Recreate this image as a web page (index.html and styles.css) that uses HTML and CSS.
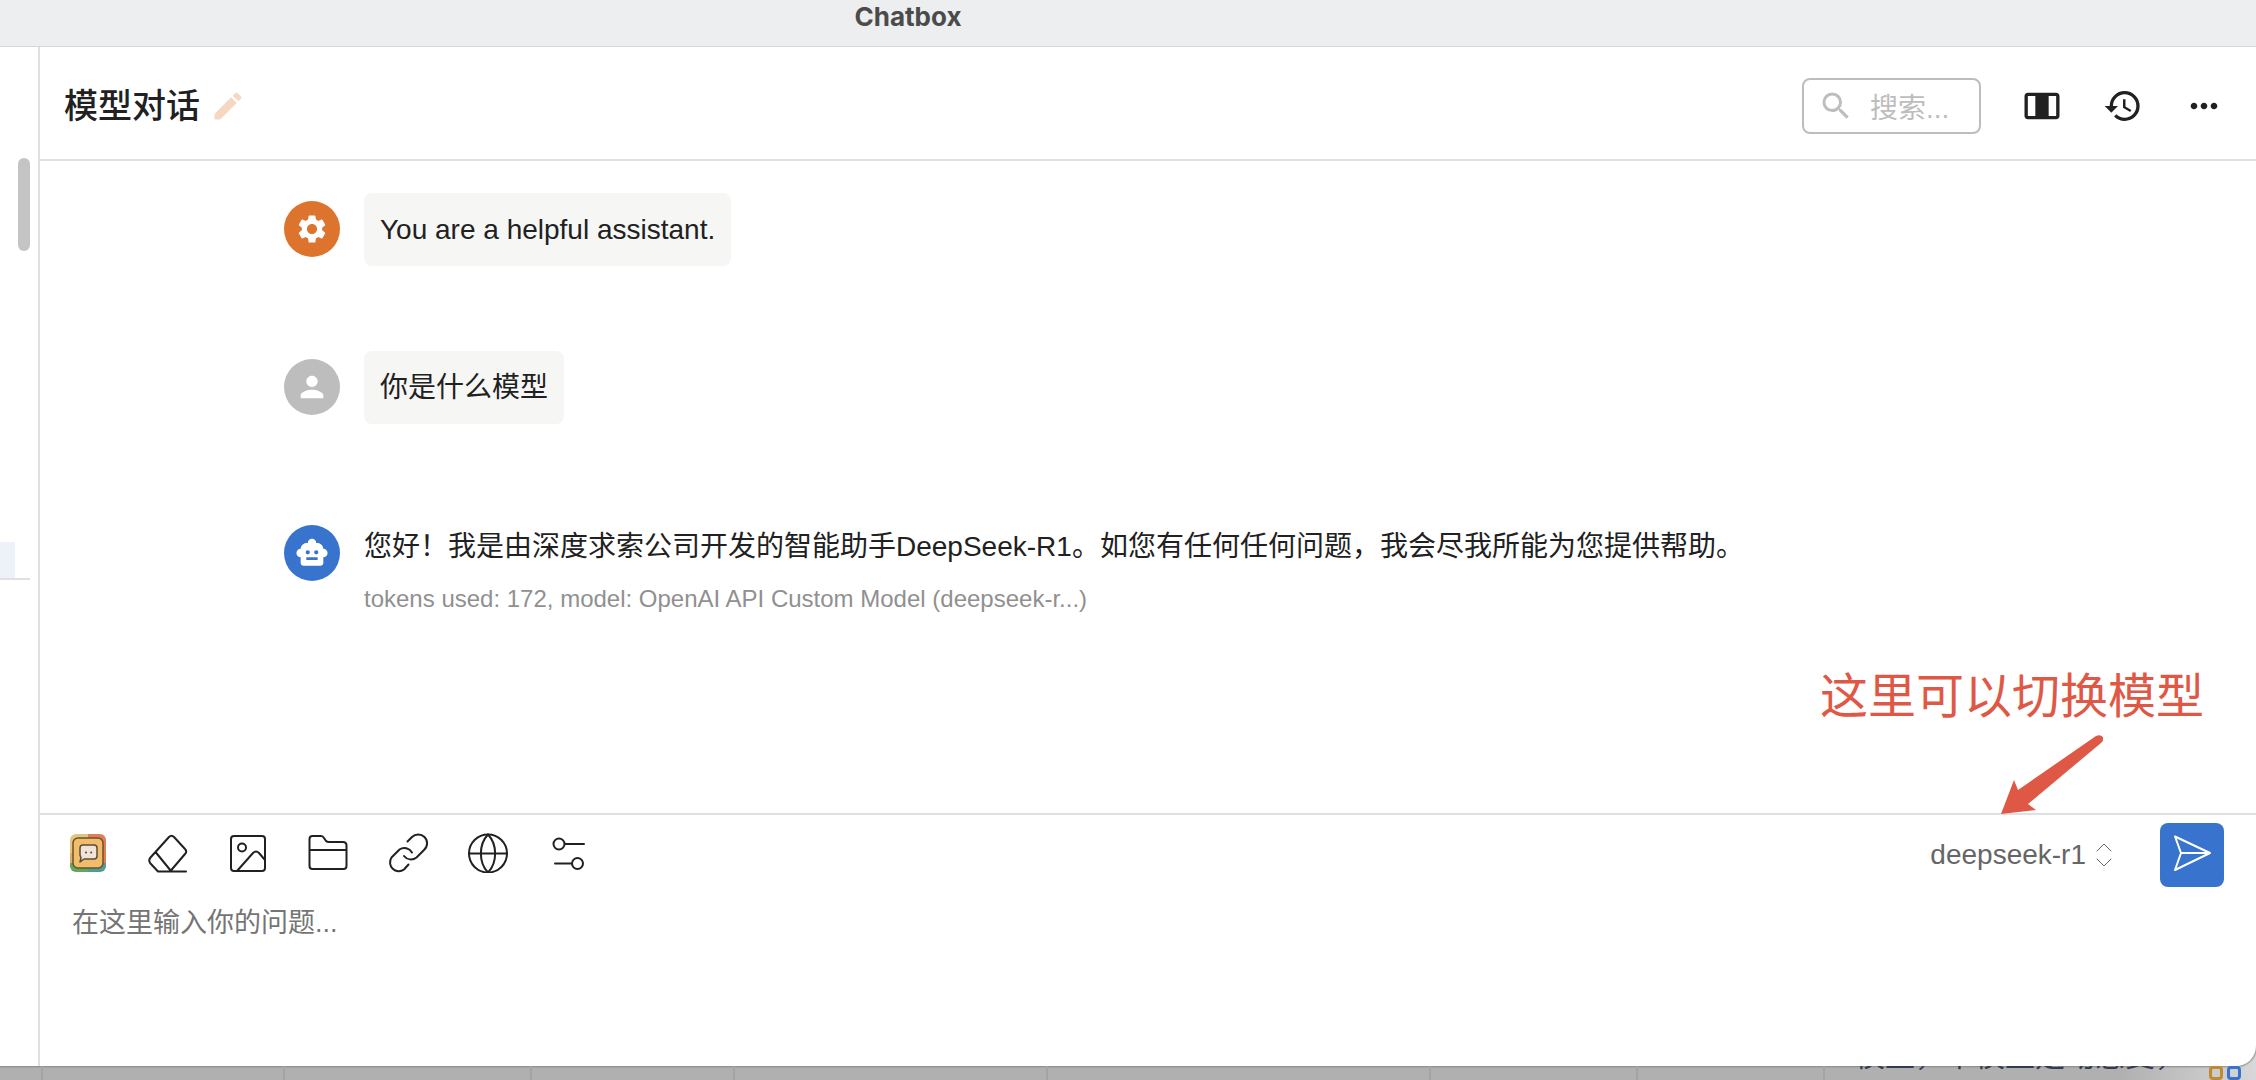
FILE: index.html
```
<!DOCTYPE html>
<html lang="zh-CN">
<head>
  <meta charset="UTF-8">
  <meta name="viewport" content="width=device-width, initial-scale=1.0">
  <title>Chatbox</title>
  <link rel="stylesheet" href="styles.css">
</head>
<body>

  <div class="window">
    <div class="titlebar">Chatbox</div>

    <div class="app">
      <aside class="sidebar">
        <div class="scrollbar"></div>
        <div class="session"></div>
      </aside>

      <main class="chat">
        <header class="chat-header">
          <h1>模型对话</h1>
          <button type="button" class="edit" aria-label="编辑">
            <svg viewBox="0 0 24 24"><path d="M3 17.25V21h3.75L17.81 9.94l-3.75-3.75L3 17.25zM20.71 7.04c.39-.39.39-1.02 0-1.41l-2.34-2.34a.996.996 0 0 0-1.41 0l-1.83 1.83 3.75 3.75 1.83-1.83z"/></svg>
          </button>
          <div class="header-tools">
            <button type="button" class="search">
              <svg viewBox="0 0 24 24"><path d="M15.5 14h-.79l-.28-.27A6.47 6.47 0 0 0 16 9.5 6.5 6.5 0 1 0 9.5 16c1.61 0 3.09-.59 4.23-1.57l.27.28v.79l5 4.99L20.49 19l-4.99-5zm-6 0C7.01 14 5 11.99 5 9.5S7.01 5 9.5 5 14 7.01 14 9.5 11.99 14 9.5 14z"/></svg>
              <span>搜索...</span>
            </button>
            <button type="button" class="icon-btn" aria-label="宽度">
              <svg viewBox="0 0 24 24"><path d="M20.500 4h-17C2.400 4 1.500 4.900 1.500 6v12c0 1.100.9 2 2 2h17c1.100 0 2-.9 2-2V6c0-1.100-.9-2-2-2zM8 18H3.500V6H8v12zm12.500 0H16V6h4.500v12z"/></svg>
            </button>
            <button type="button" class="icon-btn" aria-label="历史">
              <svg viewBox="0 0 24 24"><path d="M13 3a9 9 0 0 0-9 9H1l3.890 3.890.07.14L9 12H6c0-3.870 3.130-7 7-7s7 3.130 7 7-3.130 7-7 7c-1.930 0-3.680-.79-4.940-2.060l-1.420 1.420A8.954 8.954 0 0 0 13 21a9 9 0 0 0 0-18zm-1 5v5l4.280 2.540.72-1.210-3.500-2.080V8H12z"/></svg>
            </button>
            <button type="button" class="icon-btn" aria-label="更多">
              <svg viewBox="0 0 24 24"><path d="M6 10c-1.100 0-2 .9-2 2s.9 2 2 2 2-.9 2-2-.9-2-2-2zm12 0c-1.100 0-2 .9-2 2s.9 2 2 2 2-.9 2-2-.9-2-2-2zm-6 0c-1.100 0-2 .9-2 2s.9 2 2 2 2-.9 2-2-.9-2-2-2z"/></svg>
            </button>
          </div>
        </header>

        <section class="messages">
          <div class="message">
            <div class="avatar system">
              <svg viewBox="0 0 24 24"><path d="M19.140 12.940c.04-.3.060-.61.060-.94 0-.32-.02-.64-.07-.94l2.030-1.580c.18-.14.23-.41.12-.61l-1.920-3.320c-.12-.22-.37-.29-.59-.22l-2.390.96c-.5-.38-1.030-.7-1.620-.94l-.36-2.540c-.04-.24-.24-.41-.48-.41h-3.840c-.24 0-.43.17-.47.41l-.36 2.540c-.59.24-1.130.57-1.620.94l-2.390-.96c-.22-.08-.47 0-.59.22L2.740 8.870c-.12.21-.08.47.12.61l2.030 1.580c-.05.3-.09.63-.09.94s.02.64.07.94l-2.030 1.580c-.18.14-.23.41-.12.61l1.920 3.320c.12.22.37.29.59.22l2.390-.96c.5.38 1.030.7 1.620.94l.36 2.540c.05.24.24.41.48.41h3.840c.24 0 .44-.17.47-.41l.36-2.540c.59-.24 1.130-.56 1.620-.94l2.390.96c.22.08.47 0 .59-.22l1.920-3.320c.12-.22.07-.47-.12-.61l-2.010-1.580zM12 15.600c-1.980 0-3.600-1.620-3.600-3.600s1.620-3.600 3.600-3.600 3.600 1.620 3.600 3.600-1.620 3.600-3.600 3.600z"/></svg>
            </div>
            <div class="bubble">You are a helpful assistant.</div>
          </div>

          <div class="message">
            <div class="avatar user">
              <svg viewBox="0 0 24 24"><path d="M12 12c2.210 0 4-1.790 4-4s-1.790-4-4-4-4 1.790-4 4 1.790 4 4 4zm0 2c-2.670 0-8 1.340-8 4v2h16v-2c0-2.660-5.330-4-8-4z"/></svg>
            </div>
            <div class="bubble">你是什么模型</div>
          </div>

          <div class="message reply">
            <div class="avatar bot">
              <svg viewBox="0 0 24 24"><path d="M20 9c-.2-2.200-2-4-4.200-4H15a3 3 0 0 0-6 0h-.8C6 5 4.200 6.800 4 9a3 3 0 0 0 0 6v4c0 1.100.9 2 2 2h12c1.100 0 2-.9 2-2v-4a3 3 0 0 0 0-6zM7.500 11.500a1.500 1.500 0 1 1 3 0 1.500 1.500 0 0 1-3 0zM16 17H8v-2h8v2zm-1-4a1.500 1.500 0 1 1 0-3 1.500 1.500 0 0 1 0 3z"/></svg>
            </div>
            <div class="reply-body">
              <p>您好！我是由深度求索公司开发的智能助手DeepSeek-R1。如您有任何任何问题，我会尽我所能为您提供帮助。</p>
              <small>tokens used: 172, model: OpenAI API Custom Model (deepseek-r...)</small>
            </div>
          </div>
        </section>

        <form class="composer">
          <!-- callout above the model picker -->
          <div class="callout">
            <span>这里可以切换模型</span>
            <svg viewBox="0 0 102 80"><path d="M0 79 13 45l4 10L95 1c6-3 10 3 5 7L27 69l8 6z"/></svg>
          </div>

          <div class="toolbar">
            <div class="tools">
              <button type="button" aria-label="Chatbox">
                <svg viewBox="0 0 40 40">
                  <clipPath id="logo"><rect x="2" y="1" width="36" height="38" rx="6"/></clipPath>
                  <g clip-path="url(#logo)" stroke="none">
                    <path fill="#e3c583" d="M0 0h20v20H0z"/>
                    <path fill="#df7e5b" d="M20 0h20v20H20z"/>
                    <path fill="#62a75e" d="M0 30h20v10H0z"/>
                    <path fill="#4d9c98" d="M20 30h20v10H20z"/>
                    <path fill="#df7e5b" d="M34 18h6v12h-6z"/>
                    <path fill="#d9b06a" d="M0 20h5v10H0z"/>
                  </g>
                  <rect x="5" y="5" width="30" height="30" rx="5" fill="#efbd6c" stroke="#6d5127" stroke-width="1.500"/>
                  <path fill="#f0e4d9" stroke="#5d4a3b" stroke-width="1.500" d="M15 12h11a3 3 0 0 1 3 3v8a3 3 0 0 1-3 3H16l-4 3 1-4-1-3v-7a3 3 0 0 1 3-3z"/>
                  <path stroke="#5d4a3b" d="M18 19.500h.1m5 0h.1"/>
                </svg>
              </button>
              <button type="button" aria-label="清空上下文">
                <svg viewBox="0 0 40 40"><path d="M10 38.500h28M10 38.500l-7.500-8q-2.500-3 0-6L21 4q2.500-2.500 5 0l11 12q2.500 2.500 0 5L22.500 38M7.500 19l15.500 19"/></svg>
              </button>
              <button type="button" aria-label="图片">
                <svg viewBox="0 0 40 40"><rect x="3" y="3" width="34" height="35" rx="3"/><circle cx="14" cy="14.500" r="4"/><path d="M9 38l16-18q3-3 6 0l6 7"/></svg>
              </button>
              <button type="button" aria-label="文件">
                <svg viewBox="0 0 40 40"><path d="M1.500 17h37M4.500 3H13q2 0 3 2l2 3q1 1 3 1h14q3.500 0 3.500 3.500V33q0 3-3 3h-31q-3 0-3-3V6q0-3 3-3z"/></svg>
              </button>
              <button type="button" aria-label="链接">
                <svg viewBox="0 0 40 40"><path d="M19.500 8.500 24 4a8.800 8.800 0 0 1 12.500 12.500l-8 8a8.800 8.800 0 0 1-12.500-1.500"/><path d="M24 19.500a8.800 8.800 0 0 0-12.500-3l-8 8A8.800 8.800 0 0 0 16 36.500l4.500-5"/></svg>
              </button>
              <button type="button" aria-label="联网">
                <svg viewBox="0 0 40 40"><circle cx="20" cy="20.500" r="19"/><path d="M1 20.500h38M20 1.500c-9.500 10-9.500 28 0 38M20 1.500c9.500 10 9.500 28 0 38"/></svg>
              </button>
              <button type="button" aria-label="设置">
                <svg viewBox="0 0 40 40"><circle cx="11" cy="11" r="5.500"/><circle cx="29.500" cy="30.500" r="5.500"/><path d="M17 11h19M7 30.500h17"/></svg>
              </button>
            </div>

            <button type="button" class="model">
              deepseek-r1
              <svg viewBox="0 0 16 24"><path d="M1 8l7-7 7 7M1 16l7 7 7-7"/></svg>
            </button>
            <button type="submit" class="send" aria-label="发送">
              <svg viewBox="0 0 40 40"><path d="M3 1.500 38 18 3 35l6-17zM9 18h29"/></svg>
            </button>
          </div>
          <textarea aria-label="问题" placeholder="在这里输入你的问题..."></textarea>
        </form>
      </main>
    </div>
  </div>

  <div class="desktop">
    <div class="columns"><i></i><i></i><i></i><i></i><i></i><i></i><i></i><i></i></div>
    <p>模型，下模型是动态变，</p>
    <div class="marks"><i></i><i></i></div>
  </div>

</body>
</html>
```

FILE: styles.css
```
* {
  box-sizing: border-box;
}

body {
  margin: 0;
  height: 100vh;
  display: flex;
  flex-direction: column;
  overflow: hidden;
  background: linear-gradient(90deg, #b0b0b0 94%, #d8d8d8);
  color: #212121;
  font-family: "Liberation Sans", "Noto Sans CJK SC", sans-serif;
  font-size: 28px;
}

h1,
p {
  margin: 0;
}

button {
  display: flex;
  align-items: center;
  padding: 0;
  border: none;
  background: none;
  color: inherit;
  font: inherit;
  cursor: pointer;
}

svg {
  display: block;
  flex: none;
  width: 40px;
  height: 40px;
  fill: currentColor;
}

.window {
  flex: 1;
  min-height: 0;
  display: flex;
  flex-direction: column;
  overflow: hidden;
  background-color: #fff;
  border-radius: 0 0 20px 0;
  box-shadow: 0 0 2px 1px #888;
}

.titlebar {
  height: 47px;
  padding-right: 440px;
  border-bottom: 1px solid #d5d6d9;
  background-color: #edeef0;
  color: #4b4b4b;
  font-family: Inter, sans-serif;
  font-size: 26px;
  font-weight: 700;
  line-height: 34px;
  text-align: center;
}

.app {
  flex: 1;
  min-height: 0;
  display: flex;
}

.sidebar {
  width: 40px;
  border-right: 2px solid #e0e0e0;
}

.scrollbar {
  width: 12px;
  height: 93px;
  margin: 111px 0 291px 18px;
  border-radius: 6px;
  background-color: #c4c4c4;
}

.session {
  width: 30px;
  height: 38px;
  border-bottom: 2px solid #e0e0e0;
  background: linear-gradient(#edf2fa, #edf2fa) no-repeat 0 0 / 15px 100%;
}

.chat {
  flex: 1;
  min-width: 0;
  display: flex;
  flex-direction: column;
}

.chat-header {
  display: flex;
  align-items: center;
  gap: 10px;
  height: 114px;
  padding: 6px 32px 0 24px;
  border-bottom: 2px solid #e0e0e0;
}

.chat-header h1 {
  padding-bottom: 6px;
  font-family: "Noto Sans CJK SC", sans-serif;
  font-size: 34px;
  font-weight: 500;
}

.edit {
  color: #f6d7c1;
}

.edit svg {
  width: 36px;
  height: 36px;
}

.header-tools {
  display: flex;
  align-items: center;
  gap: 41px;
  margin-left: auto;
}

.search {
  gap: 16px;
  width: 179px;
  height: 56px;
  padding-left: 14px;
  border: 2px solid #bdbdbd;
  border-radius: 8px;
  color: #bdbdbd;
}

.search svg {
  width: 36px;
  height: 36px;
}

.messages {
  flex: 1;
  display: flex;
  flex-direction: column;
  gap: 85px;
  padding: 32px 244px 0;
}

.message {
  display: flex;
  gap: 24px;
}

.reply {
  padding-top: 8px;
}

.avatar {
  flex: none;
  display: flex;
  align-items: center;
  justify-content: center;
  width: 56px;
  height: 56px;
  margin-top: 8px;
  border-radius: 50%;
  color: #fff;
}

.avatar svg {
  width: 34px;
  height: 34px;
}

.system {
  background-color: #dc742e;
}

.user {
  background-color: #bdbdbd;
}

.bot {
  background-color: #3873cd;
}

.bubble {
  padding: 16px;
  border-radius: 8px;
  background-color: #f6f6f5;
  line-height: 41px;
}

.reply-body {
  padding-top: 8px;
  line-height: 44px;
}

.reply-body small {
  display: block;
  padding-top: 8px;
  color: #909090;
  font-size: 24px;
}

.composer {
  position: relative;
  display: flex;
  flex-direction: column;
  height: 253px;
  padding: 8px 32px 0 28px;
  border-top: 2px solid #e0e0e0;
}

.toolbar {
  display: flex;
  align-items: center;
  height: 64px;
}

.tools {
  display: flex;
  gap: 40px;
  padding-bottom: 4px;
}

.toolbar svg {
  fill: none;
  stroke: currentColor;
  stroke-width: 2;
  stroke-linecap: round;
  stroke-linejoin: round;
}

.model {
  gap: 10px;
  margin-left: auto;
  color: #666;
}

.toolbar .model svg {
  width: 16px;
  height: 24px;
  stroke-width: 1;
}

.send {
  justify-content: center;
  width: 64px;
  height: 64px;
  margin-left: 48px;
  border-radius: 8px;
  background-color: #3873cd;
  color: #fff;
}

textarea {
  flex: 1;
  margin-top: 16px;
  padding: 0 4px;
  border: none;
  outline: none;
  resize: none;
  font: inherit;
  font-size: 27px;
  line-height: 40px;
}

textarea::placeholder {
  color: #757575;
}

.callout {
  position: absolute;
  right: 52px;
  bottom: 100%;
  color: #df5846;
  font-size: 48px;
  line-height: 76px;
}

.callout svg {
  width: 102px;
  height: 80px;
  margin-left: 181px;
}

/* strip of the window lying behind */
.desktop {
  display: flex;
  justify-content: flex-end;
  height: 14px;
  padding-right: 15px;
  overflow: hidden;
}

.columns {
  flex: 1;
  display: grid;
  grid-template-columns: 43fr 242fr 247fr 203fr 312fr 383fr 207fr 187fr;
  margin-right: 30px;
}

.columns i {
  border-right: 2px solid #a4a4a4;
}

.desktop p {
  margin-top: -10px;
  color: #333c4e;
  font-size: 30px;
  line-height: 0;
}

.marks {
  display: flex;
  gap: 4px;
  margin-left: 24px;
}

.marks i {
  width: 14px;
  height: 14px;
  border: 3px solid #c08a2e;
  border-radius: 4px;
}

.marks i + i {
  border-color: #3873cd;
}
```
